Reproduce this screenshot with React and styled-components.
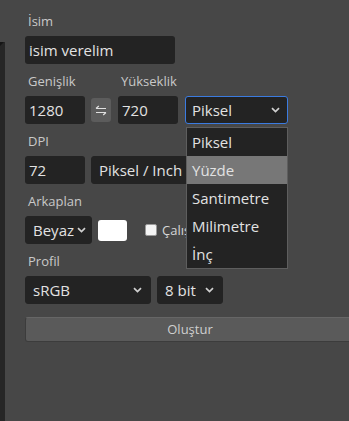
import styled, { createGlobalStyle } from "styled-components";

const GlobalStyle = createGlobalStyle`
  html, body {
    margin: 0;
    padding: 0;
    overflow: hidden;
    background: #474747;
  }
  body {
    font-family: "Open Sans", "Noto Sans", sans-serif;
  }
`;

const Page = styled.div`
  display: flex;
  height: 100vh;
  background: #474747;
  overflow: hidden;
`;

const Strip = styled.div`
  position: relative;
  flex: 0 0 5px;
  margin-top: 42px;
  background: #262626;

  &::before {
    content: "";
    position: absolute;
    top: 0;
    left: 0;
    border-top: 4px solid #151515;
    border-right: 4px solid transparent;
  }
`;

const Panel = styled.div`
  flex: 1;
  min-width: 0;
  padding: 12px 0 0 20px;
  display: flex;
  flex-direction: column;
  gap: 8px;
`;

const Field = styled.div`
  display: flex;
  flex-direction: column;
  gap: 6px;
`;

const Label = styled.div`
  font-size: 13px;
  line-height: 18px;
  color: #c9c9c9;
  padding-left: 3px;
  white-space: nowrap;
`;

const Row = styled.div`
  display: flex;
  align-items: ${(p) => p.$align ?? "center"};
  gap: ${(p) => p.$gap ?? 6}px;
`;

const Input = styled.div`
  box-sizing: border-box;
  width: ${(p) => p.$w}px;
  height: 28px;
  padding: 0 4px;
  background: #232323;
  border-radius: 3px;
  color: #e2e2e2;
  font-size: 15px;
  line-height: 28px;
  white-space: nowrap;
  overflow: hidden;
`;

const SelectBox = styled.div`
  position: relative;
  box-sizing: border-box;
  width: ${(p) => p.$w}px;
  height: 28px;
  padding: 0 ${(p) => p.$pr ?? 8}px 0 ${(p) => p.$pl ?? 7}px;
  display: flex;
  align-items: center;
  justify-content: space-between;
  background: #232323;
  border: 1px solid ${(p) => (p.$focus ? "#3b7be0" : "#232323")};
  border-radius: 3px;
  color: #e2e2e2;
  font-size: 15px;
  white-space: nowrap;
`;

const SelectText = styled.span`
  overflow: hidden;
`;

const SwapSlot = styled.div`
  height: 28px;
  display: flex;
  align-items: center;
  margin: 0 7px 0 6px;
`;

const SwapButton = styled.div`
  width: 20px;
  height: 24px;
  display: flex;
  align-items: center;
  justify-content: center;
  background: #5c5c5c;
  border-radius: 3px;
`;

const UnitSlot = styled.div`
  margin-left: 7px;
`;

const Swatch = styled.div`
  width: 29px;
  height: 21px;
  background: #ffffff;
  border-radius: 3px;
  margin-right: 12px;
`;

const Check = styled.div`
  display: flex;
  align-items: center;
  gap: 5px;
  font-size: 13px;
  color: #d6d6d6;
  white-space: nowrap;

  &::before {
    content: "";
    box-sizing: border-box;
    width: 12px;
    height: 12px;
    background: #f4f4f4;
    border: 1px solid #9a9a9a;
    border-radius: 2px;
  }
`;

/* the open menu covers the rest of this label */
const CheckText = styled.span`
  display: block;
  max-width: 24px;
  overflow: hidden;
`;

const Menu = styled.div`
  position: absolute;
  z-index: 5;
  top: calc(100% + 4px);
  left: 0;
  box-sizing: border-box;
  width: 102px;
  background: #232323;
  border: 1px solid #5e5e5e;
`;

const MenuItem = styled.div`
  height: 28px;
  line-height: 28px;
  padding-left: 5px;
  font-size: 15px;
  color: #e2e2e2;
  background: ${(p) => (p.$active ? "#777777" : "transparent")};
`;

const CreateButton = styled.div`
  box-sizing: border-box;
  width: 330px;
  height: 25px;
  margin-top: 5px;
  background: #5a5a5a;
  border: 1px solid #3c3c3c;
  border-top-color: #666;
  border-radius: 3px;
  color: #cfcfcf;
  font-size: 13px;
  line-height: 23px;
  text-align: center;
`;

function Chevron() {
  return (
    <svg width="9" height="6" viewBox="0 0 9 6">
      <path d="M1 1.2 L4.5 4.6 L8 1.2" fill="none" stroke="#d0d0d0" strokeWidth="1.7" />
    </svg>
  );
}

function SwapIcon() {
  return (
    <svg width="12" height="11" viewBox="0 0 12 11">
      <path
        d="M1 3.5 H11 M1 3.5 L3.8 1 M11 7.5 H1 M11 7.5 L8.2 10"
        fill="none"
        stroke="#e0e0e0"
        strokeWidth="1.2"
      />
    </svg>
  );
}

const units = ["Piksel", "Yüzde", "Santimetre", "Milimetre", "İnç"];

function Select({ value, w, pl, pr, focus, children }) {
  return (
    <SelectBox $w={w} $pl={pl} $pr={pr} $focus={focus}>
      <SelectText>{value}</SelectText>
      <Chevron />
      {children}
    </SelectBox>
  );
}

export default function App() {
  return (
    <Page>
      <GlobalStyle />
      <Strip />
      <Panel>
        <Field>
          <Label>İsim</Label>
          <Input $w={150}>isim verelim</Input>
        </Field>

        <Row $gap={0} $align="flex-end">
          <Field>
            <Label>Genişlik</Label>
            <Input $w={60}>1280</Input>
          </Field>
          <SwapSlot>
            <SwapButton>
              <SwapIcon />
            </SwapButton>
          </SwapSlot>
          <Field>
            <Label>Yükseklik</Label>
            <Input $w={60}>720</Input>
          </Field>
          <UnitSlot>
            <Select value="Piksel" w={103} focus pl={6} pr={7}>
              <Menu>
                {units.map((u) => (
                  <MenuItem key={u} $active={u === "Yüzde"}>
                    {u}
                  </MenuItem>
                ))}
              </Menu>
            </Select>
          </UnitSlot>
        </Row>

        <Field>
          <Label>DPI</Label>
          <Row>
            <Input $w={60}>72</Input>
            <Select value="Piksel / Inch" w={130} />
          </Row>
        </Field>

        <Field>
          <Label>Arkaplan</Label>
          <Row>
            <Select value="Beyaz" w={67} pr={5} />
            <Swatch />
            <Check>
              <CheckText>Çalışma alanı</CheckText>
            </Check>
          </Row>
        </Field>

        <Field>
          <Label>Profil</Label>
          <Row>
            <Select value="sRGB" w={126} />
            <Select value="8 bit" w={66} />
          </Row>
        </Field>

        <CreateButton>Oluştur</CreateButton>
      </Panel>
    </Page>
  );
}
